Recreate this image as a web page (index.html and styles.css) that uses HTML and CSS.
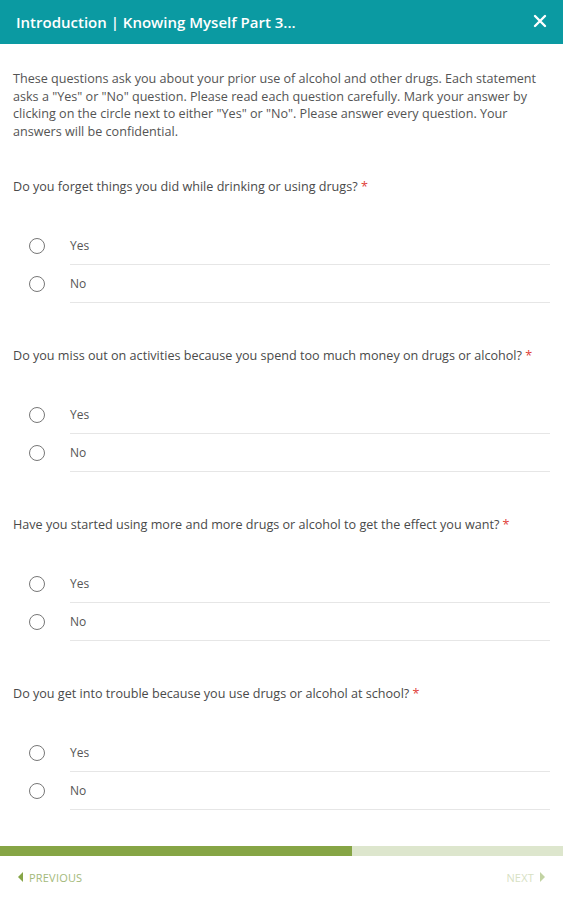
FILE: index.html
```html
<!DOCTYPE html>
<html>
<head>
<meta charset="utf-8">
<link rel="stylesheet" href="styles.css">
</head>
<body>
<div class="page">
  <header class="topbar">
    <h1 class="title">Introduction | Knowing Myself Part 3...</h1>
    <svg class="close" width="14" height="14" viewBox="0 0 14 14"><path d="M2 2L12 12M12 2L2 12" stroke="#fff" stroke-width="2.4" stroke-linecap="round"/></svg>
  </header>
  <main class="content">
    <p class="intro">These questions ask you about your prior use of alcohol and other drugs. Each statement asks a "Yes" or "No" question. Please read each question carefully. Mark your answer by clicking on the circle next to either "Yes" or "No". Please answer every question. Your answers will be confidential.</p>

    <section class="question">
      <p class="qtext">Do you forget things you did while drinking or using drugs? <span class="req">*</span></p>
      <div class="options">
        <label class="option"><span class="radio"></span><span class="olabel">Yes</span></label>
        <label class="option"><span class="radio"></span><span class="olabel">No</span></label>
      </div>
    </section>

    <section class="question">
      <p class="qtext">Do you miss out on activities because you spend too much money on drugs or alcohol? <span class="req">*</span></p>
      <div class="options">
        <label class="option"><span class="radio"></span><span class="olabel">Yes</span></label>
        <label class="option"><span class="radio"></span><span class="olabel">No</span></label>
      </div>
    </section>

    <section class="question">
      <p class="qtext">Have you started using more and more drugs or alcohol to get the effect you want? <span class="req">*</span></p>
      <div class="options">
        <label class="option"><span class="radio"></span><span class="olabel">Yes</span></label>
        <label class="option"><span class="radio"></span><span class="olabel">No</span></label>
      </div>
    </section>

    <section class="question">
      <p class="qtext">Do you get into trouble because you use drugs or alcohol at school? <span class="req">*</span></p>
      <div class="options">
        <label class="option"><span class="radio"></span><span class="olabel">Yes</span></label>
        <label class="option"><span class="radio"></span><span class="olabel">No</span></label>
      </div>
    </section>
  </main>
  <div class="progress"><div class="progress-fill" style="width:352px"></div></div>
  <nav class="pager">
    <a class="prev"><span class="tri-left"></span>PREVIOUS</a>
    <a class="next">NEXT<span class="tri-right"></span></a>
  </nav>
</div>
</body>
</html>
```
FILE: styles.css
```css
* { box-sizing: border-box; }
html, body { margin: 0; padding: 0; background: #fff; }
body { font-family: "Open Sans", "Liberation Sans", sans-serif; color: #444; }
.page { width: 563px; height: 900px; display: flex; flex-direction: column; }
.topbar {
  height: 44px; background: #0b9aa2; display: flex; align-items: center;
  justify-content: space-between; padding: 0 16px 0 16px; flex-shrink: 0;
}
.title { margin: 0; font-size: 15px; font-weight: 600; color: #fff; letter-spacing: 0; }
.close { display: block; margin-top: -2px; }
.content { padding: 26px 13px 0 13px; flex: 1; }
.intro { margin: 0; font-size: 12.6px; line-height: 17.7px; color: #545454; }
.question { margin-top: 37px; }
.question + .question { margin-top: 44px; }
.qtext { margin: 0; font-size: 12.6px; line-height: 17px; color: #4a4a4a; }
.req { color: #e0413a; }
.options { margin-top: 32px; padding-left: 16px; }
.option { display: flex; align-items: center; height: 38px; }
.radio {
  width: 16px; height: 16px; border: 1.5px solid #777; border-radius: 50%; flex-shrink: 0;
}
.olabel {
  margin-left: 25px; flex: 1; align-self: stretch; display: flex; align-items: center;
  border-bottom: 1px solid #e6e6e6; font-size: 12px; color: #555;
}
.progress { height: 10px; background: #dde6cd; flex-shrink: 0; }
.progress-fill { height: 100%; background: #86a545; }
.pager { height: 44px; display: flex; justify-content: space-between; align-items: center; padding: 0 18px 2px 18px; flex-shrink: 0; }
.prev, .next { font-size: 11px; display: flex; align-items: center; letter-spacing: 0.2px; }
.prev { color: #a3b97a; }
.next { color: #d7e1c3; }
.tri-left { width: 0; height: 0; border-top: 5px solid transparent; border-bottom: 5px solid transparent; border-right: 5px solid #86a547; margin-right: 6px; }
.tri-right { width: 0; height: 0; border-top: 5px solid transparent; border-bottom: 5px solid transparent; border-left: 5px solid #c2d3a3; margin-left: 6px; }
```
